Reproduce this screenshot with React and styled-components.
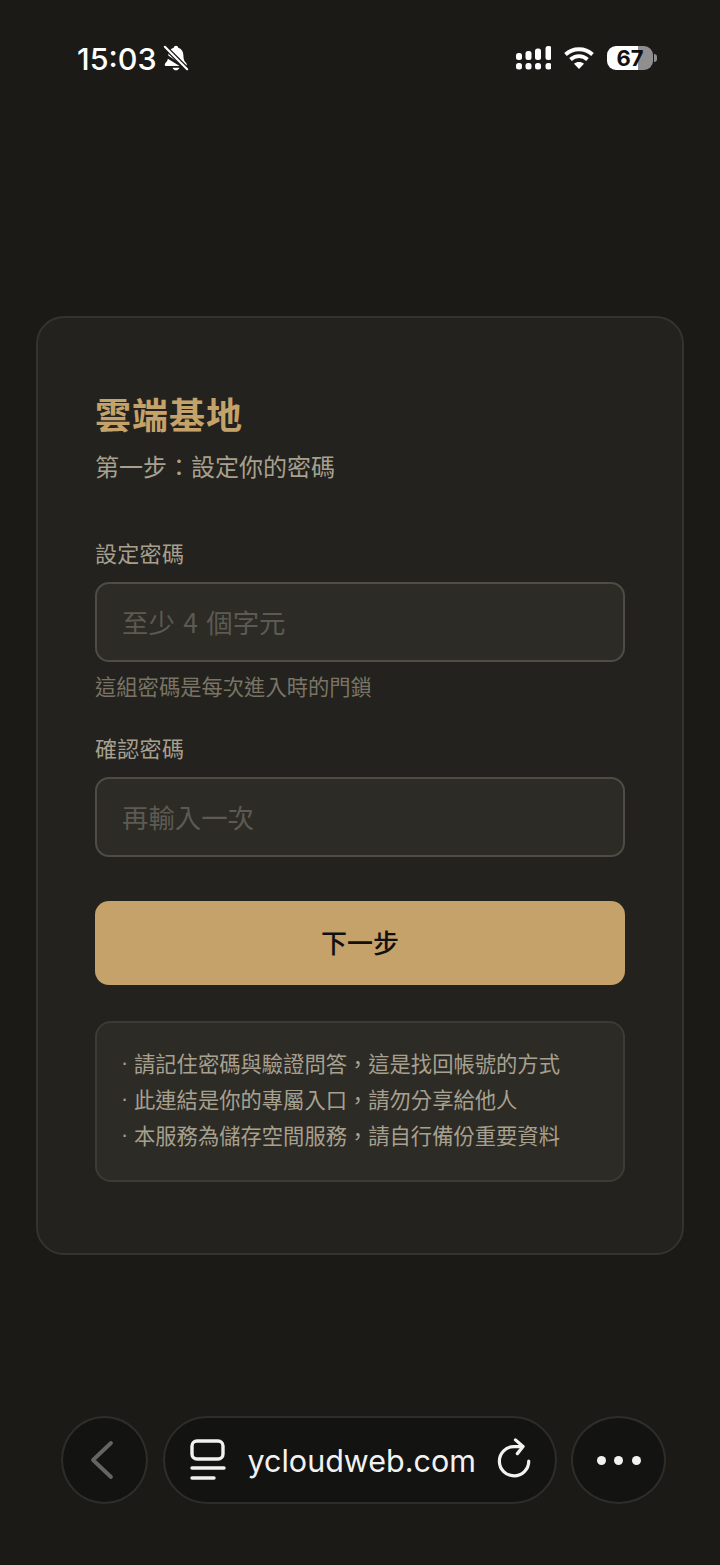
import React from 'react';
import styled, { createGlobalStyle } from 'styled-components';

const GlobalStyle = createGlobalStyle`
  html, body {
    margin: 0;
    padding: 0;
    background: #1b1a17;
  }
  * {
    box-sizing: border-box;
  }
  input::placeholder {
    color: #5c5a52;
    opacity: 1;
  }
`;

const Page = styled.div`
  width: 720px;
  height: 1565px;
  overflow: hidden;
  display: flex;
  flex-direction: column;
  background: #1b1a17;
  font-family: "Noto Sans CJK TC", "Noto Sans", sans-serif;
`;

const StatusBar = styled.div`
  height: 316px;
  flex: none;
  padding: 40px 67px 0 77px;
  display: flex;
  justify-content: space-between;
  align-items: flex-start;
  color: #fff;
`;

const StatusLeft = styled.div`
  display: flex;
  align-items: center;
  gap: 4px;
  height: 36px;
`;

const Clock = styled.span`
  font-family: Inter, sans-serif;
  font-size: 30.5px;
  font-weight: 500;
`;

const StatusRight = styled.div`
  display: flex;
  align-items: center;
  height: 36px;
  gap: 13px;
`;

const Battery = styled.div`
  position: relative;
  width: 46px;
  height: 24px;
  border-radius: 9px;
  background: linear-gradient(90deg, #fff 0 67%, #8f8f8f 67% 100%);
  display: flex;
  align-items: center;
  justify-content: center;
  color: #111;
  font-family: Inter, sans-serif;
  font-size: 22px;
  font-weight: 700;
  &::after {
    content: '';
    position: absolute;
    right: -4px;
    top: 8px;
    width: 3px;
    height: 8px;
    border-radius: 0 3px 3px 0;
    background: #8f8f8f;
  }
`;

const Card = styled.div`
  margin: 0 36px;
  height: 939px;
  flex: none;
  padding: 73px 57px 0;
  background: #23221e;
  border: 2px solid #343330;
  border-radius: 28px;
`;

const Title = styled.h1`
  margin: 0;
  font-size: 36px;
  line-height: 44px;
  font-weight: 700;
  letter-spacing: 1px;
  color: #c4a26a;
`;

const Subtitle = styled.p`
  margin: 13px 0 0;
  font-size: 24px;
  line-height: 36px;
  color: #a8a08e;
`;

const Field = styled.div`
  margin-top: ${props => props.$top}px;
`;

const Label = styled.label`
  display: block;
  font-size: 22px;
  letter-spacing: 0.3px;
  line-height: 32px;
  color: #a8a08e;
`;

const Input = styled.input`
  display: block;
  width: 100%;
  height: 80px;
  margin-top: 14px;
  padding: 0 25px 2px;
  background: #2c2b26;
  border: 2px solid #4e4c45;
  border-radius: 14px;
  font-family: inherit;
  font-size: 26.4px;
  word-spacing: 2.5px;
  color: #e8e4d8;
  outline: none;
`;

const Hint = styled.p`
  margin: 8px 0 0;
  font-size: 21.3px;
  line-height: 32px;
  color: #7a7464;
`;

const NextButton = styled.button`
  display: block;
  width: 100%;
  height: 84px;
  margin-top: 44px;
  padding: 0 0 3px;
  border: none;
  border-radius: 14px;
  background: #c4a26a;
  color: #111;
  font-family: inherit;
  font-size: 26px;
  font-weight: 500;
`;

const NoteBox = styled.div`
  margin-top: 36px;
  height: 161px;
  padding: 22px 26px 0 24px;
  background: #2c2b26;
  border: 2px solid #3d3b35;
  border-radius: 16px;
`;

const Note = styled.div`
  display: flex;
  font-size: 21.3px;
  line-height: 36px;
  color: #a8a08e;
`;

const Dot = styled.span`
  width: 13px;
  flex: none;
  font-family: "Liberation Sans", sans-serif;
`;

const BrowserBar = styled.div`
  margin-top: 161px;
  padding: 0 54px 0 61px;
  display: flex;
  align-items: center;
  gap: 14.5px;
`;

const RoundButton = styled.div`
  width: ${props => props.$size}px;
  height: 88px;
  flex: none;
  border-radius: 50%;
  background: #131312;
  border: 2px solid #2e2d2a;
  display: flex;
  align-items: center;
  justify-content: center;
`;

const UrlPill = styled.div`
  width: 394px;
  height: 88px;
  flex: none;
  border-radius: 44px;
  background: #131312;
  border: 2px solid #2e2d2a;
  padding: 0 21.5px 0 25px;
  display: flex;
  align-items: center;
`;

const UrlText = styled.span`
  margin-left: 22px;
  margin-right: auto;
  font-family: Inter, "Liberation Sans", sans-serif;
  font-size: 30.5px;
  color: #f2f2f2;
`;

const MoreDots = styled.div`
  display: flex;
  gap: 8.5px;
  & > span {
    width: 9px;
    height: 9px;
    border-radius: 50%;
    background: #f2f2f2;
  }
`;

const BellOff = () => (
  <svg width="30" height="30" viewBox="0 0 28 28" fill="#fff">
    <path d="M14 2.5c-1.2 0-2 .8-2.1 1.9C8.7 5.3 7.2 7.6 6.9 10.5l-.1 1.2L21 21.5h1.6c.9 0 1.5-.6 1.5-1.3 0-1.1-1.4-2.2-2.2-3.4-.8-1.5-.9-3.6-1-5.4-.2-3.6-1.7-6-4.8-7-.1-1.1-.9-1.9-2.1-1.9z" />
    <path d="M6.4 14.6c-.2 1-.5 1.8-1 2.6-.9 1.1-1.9 1.9-1.9 3 0 .8.6 1.3 1.5 1.3h12.4z" />
    <path d="M10.8 23h6.4c-.4 1.4-1.7 2.4-3.2 2.4s-2.8-1-3.2-2.4z" />
    <path d="M3.2 3.2l21.6 21.6" stroke="#1b1a17" strokeWidth="4.4" />
    <path d="M3.6 3.6l20.8 20.8" stroke="#fff" strokeWidth="2" strokeLinecap="round" />
  </svg>
);

const Signal = () => (
  <svg width="35.5" height="24" viewBox="0 0 35.5 24" fill="#fff">
    <rect x="0" y="7" width="6" height="7" rx="2.5" />
    <rect x="9.5" y="5" width="6" height="9" rx="2.5" />
    <rect x="19" y="2.5" width="6" height="11.5" rx="2.5" />
    <rect x="29.5" y="0" width="6" height="14" rx="2.5" />
    <rect x="0" y="17" width="6" height="6.5" rx="2.5" />
    <rect x="9.5" y="17" width="6" height="6.5" rx="2.5" />
    <rect x="19" y="17" width="6" height="6.5" rx="2.5" />
    <rect x="29.5" y="17" width="6" height="6.5" rx="2.5" />
  </svg>
);

const Wifi = () => (
  <svg width="30" height="24" viewBox="0 0 30 24" fill="none" stroke="#fff" strokeWidth="3.8">
    <path d="M1.5 8.5C9 1.5 21 1.5 28.5 8.5" />
    <path d="M6.5 13.5C11.4 9 18.6 9 23.5 13.5" />
    <path d="M15 23l-5-5.2c2.8-2.4 7.2-2.4 10 0z" fill="#fff" stroke="none" />
  </svg>
);

const BackIcon = () => (
  <svg width="30" height="44" viewBox="0 0 30 44" fill="none" stroke="#66655f" strokeWidth="3.8" strokeLinecap="round" strokeLinejoin="round">
    <path d="M21 5L3 22l18 17" />
  </svg>
);

const TabsIcon = () => (
  <svg width="36" height="42" viewBox="0 0 36 42" fill="none" stroke="#f2f2f2" strokeWidth="3.4" strokeLinecap="round">
    <rect x="2" y="2" width="31" height="18" rx="5" />
    <path d="M2 29h32" />
    <path d="M2 39h22" />
  </svg>
);

const ReloadIcon = () => (
  <svg width="36" height="44.5" viewBox="0 -1 38 47" fill="none" stroke="#f2f2f2" strokeWidth="3.4" strokeLinecap="round" strokeLinejoin="round">
    <path d="M33.5 23.5A15.5 15.5 0 1 1 18 8h9" />
    <path d="M19.5 1l8 7-6 7.5" />
  </svg>
);

const NOTES = [
  '請記住密碼與驗證問答\uFF0C這是找回帳號的方式',
  '此連結是你的專屬入口\uFF0C請勿分享給他人',
  '本服務為儲存空間服務\uFF0C請自行備份重要資料',
];

export default function App() {
  return (
    <Page>
      <GlobalStyle />
      <StatusBar>
        <StatusLeft>
          <Clock>15:03</Clock>
          <BellOff />
        </StatusLeft>
        <StatusRight>
          <Signal />
          <Wifi />
          <Battery>67</Battery>
        </StatusRight>
      </StatusBar>

      <Card>
        <Title>雲端基地</Title>
        <Subtitle>{'第一步\uFF1A設定你的密碼'}</Subtitle>

        <Field $top={52}>
          <Label>設定密碼</Label>
          <Input placeholder="至少 4 個字元" type="password" />
          <Hint>這組密碼是每次進入時的門鎖</Hint>
        </Field>

        <Field $top={29}>
          <Label>確認密碼</Label>
          <Input placeholder="再輸入一次" type="password" />
        </Field>

        <NextButton>下一步</NextButton>

        <NoteBox>
          {NOTES.map(note => (
            <Note key={note}><Dot>·</Dot>{note}</Note>
          ))}
        </NoteBox>
      </Card>

      <BrowserBar>
        <RoundButton $size={87}><BackIcon /></RoundButton>
        <UrlPill>
          <TabsIcon />
          <UrlText>ycloudweb.com</UrlText>
          <ReloadIcon />
        </UrlPill>
        <RoundButton $size={95}>
          <MoreDots><span /><span /><span /></MoreDots>
        </RoundButton>
      </BrowserBar>
    </Page>
  );
}
